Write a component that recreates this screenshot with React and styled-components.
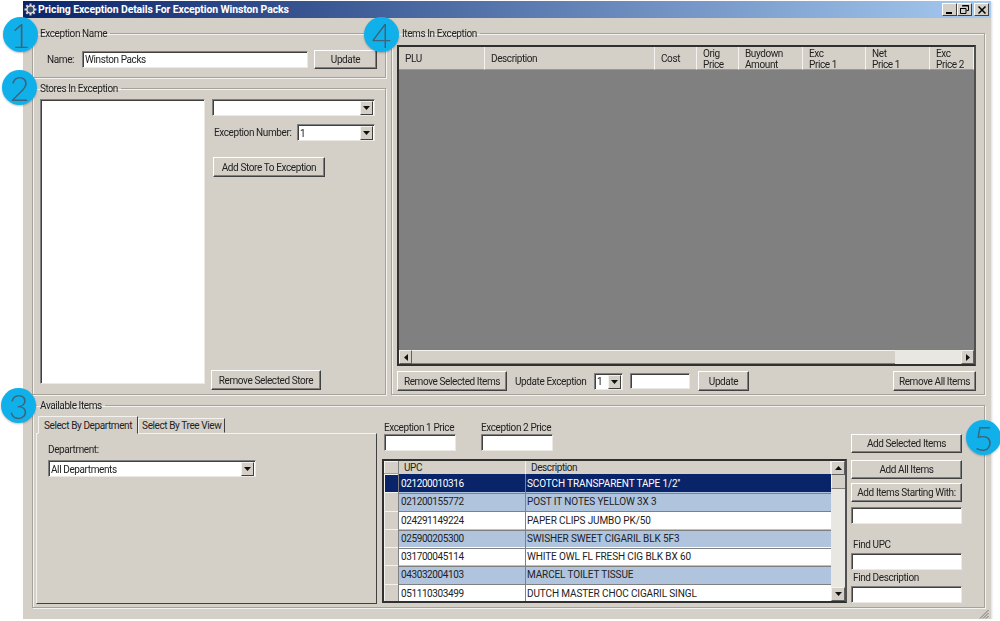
import React from 'react';
import styled, { createGlobalStyle } from 'styled-components';

const GlobalStyle = createGlobalStyle`
	html, body {
		margin: 0;
		padding: 0;
		background: #fff;
	}
	body {
		font-family: Roboto, 'Liberation Sans', Arial, sans-serif;
		font-size: 10px;
		letter-spacing: -0.4px;
		color: #222;
	}
`;

const itemColumns = [
	{ lines: ['PLU'], width: 86 },
	{ lines: ['Description'], width: 170 },
	{ lines: ['Cost'], width: 42 },
	{ lines: ['Orig', 'Price'], width: 42 },
	{ lines: ['Buydown', 'Amount'], width: 64 },
	{ lines: ['Exc', 'Price 1'], width: 63 },
	{ lines: ['Net', 'Price 1'], width: 64 },
	{ lines: ['Exc', 'Price 2'], width: 44 },
];

const products = [
	['021200010316', "SCOTCH TRANSPARENT TAPE 1/2''"],
	['021200155772', 'POST IT NOTES YELLOW 3X 3'],
	['024291149224', 'PAPER CLIPS JUMBO PK/50'],
	['025900205300', 'SWISHER SWEET CIGARIL BLK 5F3'],
	['031700045114', 'WHITE OWL FL FRESH CIG BLK BX 60'],
	['043032004103', 'MARCEL TOILET TISSUE'],
	['051110303499', 'DUTCH MASTER CHOC CIGARIL SINGL'],
];

const Arrow = ({ dir = 'down' }) => {
	const points = {
		down: '0,0 7,0 3.5,4',
		up: '0,4 7,4 3.5,0',
		left: '4,0 4,7 0,3.5',
		right: '0,0 0,7 4,3.5',
	};
	const horizontal = dir === 'left' || dir === 'right';
	return (
		<svg width={horizontal ? 4 : 7} height={horizontal ? 7 : 4}>
			<polygon points={points[dir]} fill="#111" />
		</svg>
	);
};

const Gear = () => (
	<svg width="13" height="13" viewBox="0 0 13 13">
		<g stroke="#d9d6cf" strokeWidth="2">
			<line x1="6.5" y1="0.5" x2="6.5" y2="12.5" />
			<line x1="0.5" y1="6.5" x2="12.5" y2="6.5" />
			<line x1="2.3" y1="2.3" x2="10.7" y2="10.7" />
			<line x1="10.7" y1="2.3" x2="2.3" y2="10.7" />
		</g>
		<circle cx="6.5" cy="6.5" r="3.6" fill="#3c4a70" stroke="#e8e6e0" strokeWidth="1.4" />
	</svg>
);

const DropDown = ({ value, width }) => (
	<SelectBox $width={width}>
		<SelectValue>{value}</SelectValue>
		<ArrowButton>
			<Arrow />
		</ArrowButton>
	</SelectBox>
);

export default function App() {
	return (
		<>
			<GlobalStyle />
			<Window>
				<TitleBar>
					<Gear />
					<Title>Pricing Exception Details For Exception Winston Packs</Title>
					<WindowButtons>
						<WindowButton>
							<svg width="8" height="8"><rect x="0" y="6" width="6" height="2" fill="#000" /></svg>
						</WindowButton>
						<WindowButton>
							<svg width="9" height="9">
								<path d="M2.5 .5h6v5h-2M.5 3.5h5.500v5h-5.500z" fill="none" stroke="#000" />
								<path d="M2 1h7M0 3.500h6" stroke="#000" />
							</svg>
						</WindowButton>
						<WindowButton $gap>
							<svg width="8" height="8"><path d="M.5 .5l7 7M7.500 .5l-7 7" stroke="#000" strokeWidth="1.500" /></svg>
						</WindowButton>
					</WindowButtons>
				</TitleBar>

				<Content>
					<TopArea>
						<LeftColumn>
							<NameGroup>
								<Legend>Exception Name</Legend>
								<NameRow>
									<span>Name:</span>
									<NameInput>Winston Packs</NameInput>
									<UpdateNameButton>Update</UpdateNameButton>
								</NameRow>
							</NameGroup>
							<StoresGroup>
								<Legend>Stores In Exception</Legend>
								<StoresBody>
									<StoreList />
									<StoreControls>
										<DropDown width={163} />
										<NumberRow>
											<NoWrap>Exception Number:</NoWrap>
											<DropDown value="1" width={78} />
										</NumberRow>
										<AddStoreButton>Add Store To Exception</AddStoreButton>
										<RemoveStoreButton>Remove Selected Store</RemoveStoreButton>
									</StoreControls>
								</StoresBody>
							</StoresGroup>
						</LeftColumn>

						<ItemsGroup>
							<ItemsLegend>Items In Exception</ItemsLegend>
							<ItemsBody>
								<ItemsTable>
									<ItemsHeader>
										{itemColumns.map(col => (
											<ItemsHeaderCell key={col.lines[0] + col.width} $width={col.width}>
												{col.lines.map(line => (
													<div key={line}>{line}</div>
												))}
											</ItemsHeaderCell>
										))}
									</ItemsHeader>
									<EmptyArea />
									<HScrollBar>
										<ScrollButton><Arrow dir="left" /></ScrollButton>
										<HThumb />
										<HTrack />
										<ScrollButton><Arrow dir="right" /></ScrollButton>
									</HScrollBar>
								</ItemsTable>
								<ItemsToolbar>
									<RemoveItemsButton>Remove Selected Items</RemoveItemsButton>
									<ToolbarLabel>Update Exception</ToolbarLabel>
									<DropDown value="1" width={29} />
									<UpdatePriceInput />
									<UpdateItemsButton>Update</UpdateItemsButton>
									<RemoveAllButton>Remove All Items</RemoveAllButton>
								</ItemsToolbar>
							</ItemsBody>
						</ItemsGroup>
					</TopArea>

					<AvailableGroup>
						<Legend>Available Items</Legend>
						<AvailableBody>
							<TabsColumn>
								<TabStrip>
									<Tab $active>Select By Department</Tab>
									<Tab>Select By Tree View</Tab>
								</TabStrip>
								<TabPanel>
									<DepartmentLabel>Department:</DepartmentLabel>
									<DropDown value="All Departments" width={208} />
								</TabPanel>
							</TabsColumn>

							<GridColumn>
								<PriceRow>
									<PriceField>
										<span>Exception 1 Price</span>
										<PriceInput />
									</PriceField>
									<PriceField>
										<span>Exception 2 Price</span>
										<PriceInput />
									</PriceField>
								</PriceRow>
								<ProductGrid>
									<ProductTable>
										<ProductHeader>
											<RowHead />
											<ProductHeadCell>UPC</ProductHeadCell>
											<ProductHeadCell>Description</ProductHeadCell>
										</ProductHeader>
										{products.map(([upc, desc], i) => (
											<ProductRow key={upc} $selected={i === 0} $alt={i === 1 || i === 3 || i === 5}>
												<RowHead $selected={i === 0} />
												<UpcCell>{upc}</UpcCell>
												<DescCell>{desc}</DescCell>
											</ProductRow>
										))}
									</ProductTable>
									<VScrollBar>
										<ScrollButton $tall><Arrow dir="up" /></ScrollButton>
										<VThumb />
										<VTrack />
										<ScrollButton $tall><Arrow /></ScrollButton>
									</VScrollBar>
								</ProductGrid>
							</GridColumn>

							<ActionColumn>
								<ActionButton>Add Selected Items</ActionButton>
								<ActionButton $top={7}>Add All Items</ActionButton>
								<ActionButton $top={4}>Add Items Starting With:</ActionButton>
								<ActionInput $top={5} />
								<ActionLabel $top={13}>Find UPC</ActionLabel>
								<ActionInput />
								<ActionLabel>Find Description</ActionLabel>
								<ActionInput />
							</ActionColumn>
						</AvailableBody>
					</AvailableGroup>
				</Content>

				<ResizeGrip width="10" height="10">
					<path d="M9.500 1L1 9.500M9.500 4L4 9.500M9.500 7L7 9.500" stroke="#777" />
				</ResizeGrip>

				<Badge $x={-20} $y={16}>1</Badge>
				<Badge $x={-21} $y={69}>2</Badge>
				<Badge $x={-22} $y={387}>3</Badge>
				<Badge $x={341} $y={16}>4</Badge>
				<Badge $x={943} $y={419}>5</Badge>
			</Window>
		</>
	);
}

const Window = styled.div`
	position: relative;
	box-sizing: border-box;
	width: 968px;
	height: 618px;
	margin: 1px 0 0 23px;
	background: #d4d0c8;
	box-shadow: 1px 1px 2px rgba(0, 0, 0, 0.15);
	filter: blur(0.35px);
`;

const TitleBar = styled.div`
	display: flex;
	align-items: center;
	gap: 1px;
	height: 17px;
	padding: 0 2px 0 1px;
	background: linear-gradient(90deg, #0a246a, #a6caf0);
`;

const Title = styled.div`
	font-size: 10.5px;
	font-weight: bold;
	letter-spacing: -0.12px;
	color: #fff;
`;

const WindowButtons = styled.div`
	display: flex;
	margin-left: auto;
`;

const WindowButton = styled.div`
	display: flex;
	align-items: center;
	justify-content: center;
	box-sizing: border-box;
	width: 15px;
	height: 13px;
	margin-left: ${p => (p.$gap ? 2 : 0)}px;
	background: #d4d0c8;
	border: 1px solid;
	border-color: #fff #404040 #404040 #fff;
`;

const Content = styled.div`
	display: flex;
	flex-direction: column;
	gap: 4px;
	padding: 9px 5px 0 9px;
`;

const TopArea = styled.div`
	display: flex;
	gap: 5px;
`;

const LeftColumn = styled.div`
	display: flex;
	flex-direction: column;
	gap: 4px;
	width: 354px;
`;

const Group = styled.fieldset`
	box-sizing: border-box;
	min-width: 0;
	margin: 0;
	padding: 0;
	border: 1px solid #a5a29b;
	box-shadow: 1px 1px 0 #f4f2ee, inset 1px 1px 0 #f4f2ee;
`;

const Legend = styled.legend`
	height: 13px;
	line-height: 13px;
	margin-left: 4px;
	padding: 0 3px;
`;

const ItemsLegend = styled(Legend)`
	margin-left: 7px;
`;

const NameGroup = styled(Group)`
	height: 51px;
`;

const StoresGroup = styled(Group)`
	height: 313px;
`;

const ItemsGroup = styled(Group)`
	width: 594px;
	height: 368px;
`;

const AvailableGroup = styled(Group)`
	width: 953px;
	height: 209px;
`;

const NameRow = styled.div`
	display: flex;
	align-items: center;
	padding: 10px 0 0 14px;
	span {
		width: 35px;
	}
`;

const Sunken = styled.div`
	box-sizing: border-box;
	background: #fff;
	border: 1px solid;
	border-color: #808080 #ece9e4 #ece9e4 #808080;
	box-shadow: inset 1px 1px 0 #404040;
`;

const NameInput = styled(Sunken)`
	width: 226px;
	height: 17px;
	line-height: 15px;
	padding-left: 2px;
`;

const Button = styled.div`
	display: flex;
	align-items: center;
	justify-content: center;
	box-sizing: border-box;
	height: 19px;
	background: #d4d0c8;
	border: 1px solid;
	border-color: #fff #404040 #404040 #fff;
	box-shadow: inset -1px -1px 0 #808080;
	white-space: nowrap;
`;

const UpdateNameButton = styled(Button)`
	width: 63px;
	margin-left: 6px;
`;

const StoresBody = styled.div`
	display: flex;
	gap: 7px;
	padding: 4px 0 0 7px;
`;

const StoreList = styled(Sunken)`
	width: 165px;
	height: 285px;
`;

const StoreControls = styled.div`
	display: flex;
	flex-direction: column;
	width: 164px;
	height: 291px;
`;

const NoWrap = styled.span`
	white-space: nowrap;
`;

const SelectBox = styled(Sunken)`
	display: flex;
	align-items: center;
	justify-content: space-between;
	flex-shrink: 0;
	width: ${p => p.$width}px;
	height: 17px;
	padding: 1px 1px 0 2px;
`;

const SelectValue = styled.div`
	white-space: nowrap;
`;

const ArrowButton = styled.div`
	display: flex;
	align-items: center;
	justify-content: center;
	box-sizing: border-box;
	width: 13px;
	height: 14px;
	background: #d4d0c8;
	border: 1px solid;
	border-color: #f4f2ee #404040 #404040 #f4f2ee;
`;

const NumberRow = styled.div`
	display: flex;
	align-items: center;
	justify-content: space-between;
	margin: 8px 0 0 2px;
	padding-right: 1px;
`;

const AddStoreButton = styled(Button)`
	width: 112px;
	height: 20px;
	margin: 16px 0 0 1px;
`;

const RemoveStoreButton = styled(Button)`
	width: 110px;
	height: 20px;
	margin-top: auto;
	margin-left: -1px;
`;

const ItemsBody = styled.div`
	display: flex;
	flex-direction: column;
	gap: 5px;
	width: 579px;
	padding: 5px 0 0 5px;
`;

const ItemsTable = styled.div`
	display: flex;
	flex-direction: column;
	box-sizing: border-box;
	height: 321px;
	border: 2px solid #303030;
	border-right-color: #505050;
	background: #808080;
`;

const ItemsHeader = styled.div`
	display: flex;
	height: 23px;
	background: #d4d0c8;
`;

const ItemsHeaderCell = styled.div`
	display: flex;
	flex-direction: column;
	justify-content: center;
	box-sizing: border-box;
	width: ${p => p.$width}px;
	padding: 1px 0 0 6px;
	border-right: 1px solid #f4f2ee;
	border-bottom: 1px solid #9a9892;
	line-height: 11px;
	white-space: nowrap;
`;

const EmptyArea = styled.div`
	flex: 1;
`;

const HScrollBar = styled.div`
	display: flex;
	height: 14px;
	background: #d4d0c8;
`;

const ScrollButton = styled.div`
	display: flex;
	align-items: center;
	justify-content: center;
	box-sizing: border-box;
	flex-shrink: 0;
	width: ${p => (p.$tall ? 14 : 13)}px;
	height: 14px;
	background: #d4d0c8;
	border: 1px solid;
	border-color: #f4f2ee #606060 #606060 #f4f2ee;
`;

const HThumb = styled.div`
	width: 483px;
	background: #d4d0c8;
	border-top: 1px solid #f4f2ee;
	border-bottom: 1px solid #808080;
`;

const HTrack = styled.div`
	flex: 1;
	background: #e9e7e2;
`;

const ItemsToolbar = styled.div`
	display: flex;
	align-items: center;
`;

const RemoveItemsButton = styled(Button)`
	width: 110px;
	height: 20px;
`;

const ToolbarLabel = styled.span`
	width: 79px;
	margin-left: 8px;
	white-space: nowrap;
`;

const UpdatePriceInput = styled(Sunken)`
	width: 60px;
	height: 16px;
	margin-left: 7px;
`;

const UpdateItemsButton = styled(Button)`
	width: 51px;
	height: 20px;
	margin-left: 8px;
`;

const RemoveAllButton = styled(Button)`
	width: 83px;
	height: 20px;
	margin-left: auto;
`;

const AvailableBody = styled.div`
	display: flex;
	padding: 4px 0 0 3px;
`;

const TabsColumn = styled.div`
	display: flex;
	flex-direction: column;
	width: 341px;
`;

const TabStrip = styled.div`
	display: flex;
	align-items: flex-end;
	height: 17px;
	padding-left: 2px;
`;

const Tab = styled.div`
	display: flex;
	align-items: center;
	box-sizing: border-box;
	height: ${p => (p.$active ? 18 : 15)}px;
	padding: 0 ${p => (p.$active ? 5 : 3)}px;
	margin-bottom: ${p => (p.$active ? -1 : 0)}px;
	background: #d4d0c8;
	border: 1px solid;
	border-color: #f4f2ee #404040 transparent #f4f2ee;
	position: relative;
	z-index: ${p => (p.$active ? 1 : 0)};
`;

const TabPanel = styled.div`
	box-sizing: border-box;
	height: 171px;
	padding: 9px 0 0 11px;
	border: 1px solid;
	border-color: #f4f2ee #404040 #404040 #f4f2ee;
`;

const DepartmentLabel = styled.div`
	height: 17px;
	line-height: 14px;
`;

const GridColumn = styled.div`
	display: flex;
	flex-direction: column;
	width: 465px;
	margin-left: 5px;
`;

const PriceRow = styled.div`
	display: flex;
	gap: 25px;
	height: 37px;
	padding: 6px 0 0 2px;
`;

const PriceField = styled.div`
	display: flex;
	flex-direction: column;
	gap: 1px;
	width: 72px;
	white-space: nowrap;
`;

const PriceInput = styled(Sunken)`
	height: 17px;
`;

const ProductGrid = styled.div`
	display: flex;
	box-sizing: border-box;
	height: 144px;
	border: 2px solid #303030;
	border-right-color: #505050;
	background: #fff;
`;

const ProductTable = styled.div`
	flex: 1;
	overflow: hidden;
`;

const productColumns = '15px 127px 1fr';

const ProductHeader = styled.div`
	display: grid;
	grid-template-columns: ${productColumns};
	height: 13px;
	background: #d4d0c8;
`;

const ProductHeadCell = styled.div`
	padding-left: 5px;
	line-height: 13px;
	border-right: 1px solid #f4f2ee;
`;

const RowHead = styled.div`
	background: ${p => (p.$selected ? '#0a246a' : '#d4d0c8')};
	border-right: 1px solid #808080;
	border-bottom: 1px solid #a5a29b;
	box-shadow: inset 1px 1px 0 #f4f2ee;
`;

const ProductRow = styled.div`
	display: grid;
	grid-template-columns: ${productColumns};
	height: 18.3px;
	line-height: 19px;
	background: ${p => (p.$selected ? '#0a246a' : p.$alt ? '#b0c4de' : '#fff')};
	color: ${p => (p.$selected ? '#fff' : '#222')};
`;

const UpcCell = styled.div`
	padding-left: 2px;
	border-right: 1px solid #808080;
	border-bottom: 1px solid #808080;
`;

const DescCell = styled.div`
	padding-left: 1px;
	border-bottom: 1px solid #808080;
	white-space: nowrap;
	letter-spacing: -0.12px;
`;

const VScrollBar = styled.div`
	display: flex;
	flex-direction: column;
	width: 14px;
	background: #e9e7e2;
`;

const VThumb = styled.div`
	height: 13px;
	background: #d4d0c8;
	border-left: 1px solid #f4f2ee;
	border-bottom: 1px solid #808080;
`;

const VTrack = styled.div`
	flex: 1;
`;

const ActionColumn = styled.div`
	display: flex;
	flex-direction: column;
	width: 111px;
	margin-left: 4px;
	padding-top: 18px;
`;

const ActionButton = styled(Button)`
	margin-top: ${p => p.$top || 0}px;
`;

const ActionInput = styled(Sunken)`
	height: 17px;
	margin-top: ${p => p.$top || 0}px;
`;

const ActionLabel = styled.div`
	height: 16px;
	line-height: 16px;
	padding-left: 2px;
	margin-top: ${p => p.$top || 0}px;
`;

const ResizeGrip = styled.svg`
	position: absolute;
	right: 2px;
	bottom: 0;
`;

const Badge = styled.div`
	position: absolute;
	left: ${p => p.$x}px;
	top: ${p => p.$y}px;
	display: flex;
	align-items: center;
	justify-content: center;
	width: 35px;
	height: 35px;
	border-radius: 50%;
	background: #10b1ea;
	box-shadow: 0 1px 2px rgba(0, 0, 0, 0.25);
	color: #3d6478;
	font-family: Lato, 'Open Sans', sans-serif;
	font-size: 34px;
	font-weight: 300;
	letter-spacing: 0;
`;
